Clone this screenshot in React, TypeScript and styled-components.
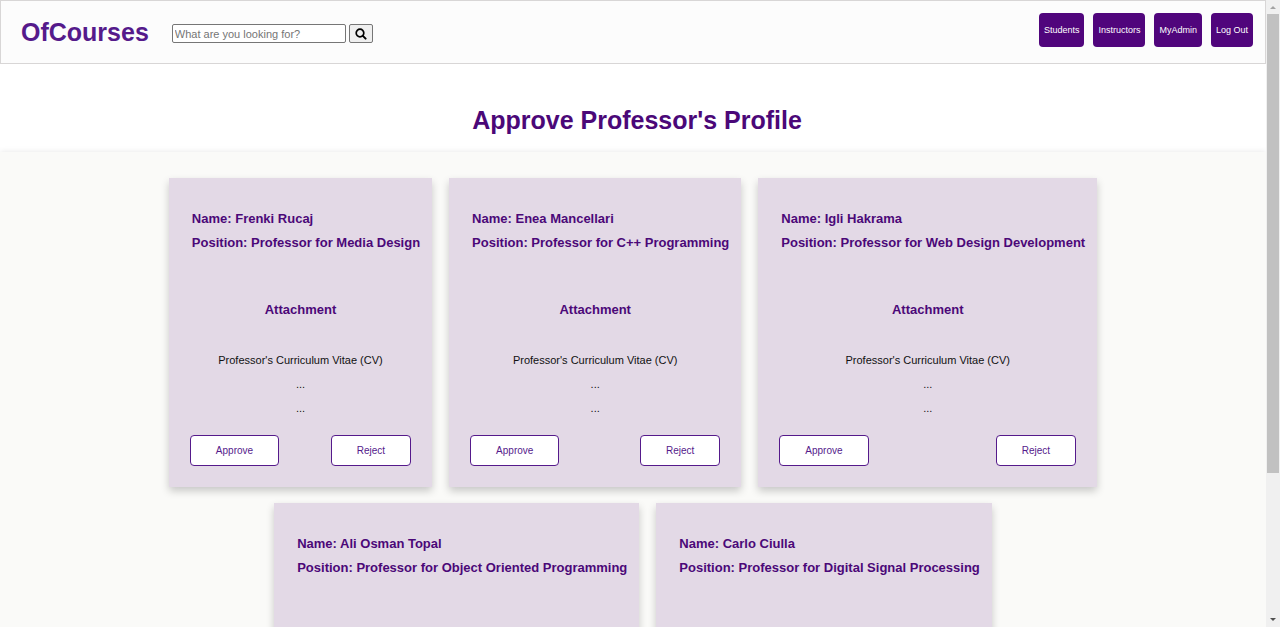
import React from "react";
import styled, { createGlobalStyle } from "styled-components";

const GlobalStyle = createGlobalStyle`
  *, *::before, *::after { box-sizing: border-box; }
  body {
    margin: 0;
    background: #fff;
    font-family: Arial, "Liberation Sans", sans-serif;
    color: #111;
  }
`;

const Shell = styled.div`
  display: flex;
  height: 100vh;
`;

const Page = styled.div`
  flex: 1;
  min-width: 0;
  display: flex;
  flex-direction: column;
  overflow-y: auto;
  scrollbar-width: none;
`;

const Header = styled.header`
  flex: none;
  display: flex;
  align-items: flex-start;
  min-height: 64px;
  padding: 12px 12px 0 20px;
  border: 1px solid #d8d6d6;
  background: #fcfcfc;
`;

const Logo = styled.a`
  color: #551a8b;
  font-size: 25px;
  line-height: 38px;
  font-weight: bold;
  text-decoration: none;
`;

const Search = styled.form`
  display: flex;
  gap: 3px;
  margin: 11px 0 0 23px;
`;

const SearchInput = styled.input`
  width: 174px;
  height: 19px;
  padding: 0 2px;
  border: 1px solid #767676;
  border-radius: 2px;
  background: #fff;
  font: 11px Arial, "Liberation Sans", sans-serif;
  &::placeholder { color: #757575; }
`;

const SearchButton = styled.button`
  display: flex;
  align-items: center;
  justify-content: center;
  width: 24px;
  height: 19px;
  padding: 0;
  border: 1px solid #767676;
  border-radius: 2px;
  background: #efefef;
`;

const Nav = styled.nav`
  display: flex;
  gap: 9px;
  margin-left: auto;
`;

const NavLink = styled.a`
  height: 34px;
  padding: 0 5px;
  border-radius: 4px;
  background: #50057c;
  color: #fff;
  font-size: 9px;
  line-height: 34px;
  text-decoration: none;
`;

const Title = styled.h1`
  flex: none;
  margin: 0;
  padding: 38px 0 14px 8px;
  color: #4b0878;
  font-size: 25px;
  line-height: 36px;
  text-align: center;
`;

const Board = styled.main`
  flex: 1 0 auto;
  display: flex;
  flex-wrap: wrap;
  justify-content: center;
  align-content: flex-start;
  gap: 16px 17px;
  padding: 26px 0 8px;
  background: #fafaf8;
  box-shadow: 0 0 6px rgba(0, 0, 0, 0.1);
`;

const Card = styled.article`
  padding: 29px 21px 21px;
  background: #e3d9e6;
  box-shadow: 0 4px 8px rgba(0, 0, 0, 0.2);
`;

const Identity = styled.h2`
  margin: 0 -9px 0 2px;
  color: #4b0878;
  font-size: 13px;
  line-height: 24px;
`;

const Attachment = styled.section`
  padding: 43px 0 15px;
  font-size: 11px;
  text-align: center;
`;

const AttachmentTitle = styled.h3`
  margin: 0 0 26px;
  color: #4b0878;
  font-size: 13px;
  line-height: 24px;
`;

const Line = styled.p`
  margin: 0;
  line-height: 24px;
`;

const Actions = styled.div`
  display: flex;
  justify-content: space-between;
`;

const Action = styled.button`
  height: 31px;
  padding: 0 25px;
  border: 1px solid #551a8b;
  border-radius: 4px;
  background: #fff;
  color: #551a8b;
  font: 10px Arial, "Liberation Sans", sans-serif;
`;

const ScrollRail = styled.div`
  flex: none;
  display: flex;
  flex-direction: column;
  align-items: center;
  width: 14px;
  background: #f0f0f0;
`;

const ScrollTrack = styled.div`
  flex: 1;
  width: 12px;
`;

const ScrollThumb = styled.div`
  height: calc(100% * 23 / 30);
  background: #c1c1c1;
`;

const Arrow = styled.svg`
  display: block;
  flex: none;
  width: 14px;
  height: 14px;
`;

const professors = [
  { name: "Frenki Rucaj", subject: "Media Design" },
  { name: "Enea Mancellari", subject: "C++ Programming" },
  { name: "Igli Hakrama", subject: "Web Design Development" },
  { name: "Ali Osman Topal", subject: "Object Oriented Programming" },
  { name: "Carlo Ciulla", subject: "Digital Signal Processing" },
];

const links = ["Students", "Instructors", "MyAdmin", "Log Out"];

export default function App() {
  return (
    <>
      <GlobalStyle />
      <Shell>
        <Page>
          <Header>
            <Logo href="#">OfCourses</Logo>
            <Search onSubmit={(e: React.FormEvent) => e.preventDefault()}>
              <SearchInput type="text" aria-label="Search" placeholder="What are you looking for?" />
              <SearchButton type="submit" aria-label="Search">
                <svg width="12" height="12" viewBox="0 0 12 12" fill="none" stroke="#000">
                  <circle cx="5" cy="5" r="3.8" strokeWidth="1.7" />
                  <path d="M7.9 7.9L10.6 10.6" strokeWidth="2" strokeLinecap="round" />
                </svg>
              </SearchButton>
            </Search>
            <Nav>
              {links.map((label) => (
                <NavLink key={label} href="#">{label}</NavLink>
              ))}
            </Nav>
          </Header>
          <Title>Approve Professor's Profile</Title>
          <Board>
            {professors.map((p) => (
              <Card key={p.name}>
                <Identity>
                  Name: {p.name}
                  <br />
                  Position: Professor for {p.subject}
                </Identity>
                <Attachment>
                  <AttachmentTitle>Attachment</AttachmentTitle>
                  <Line>Professor's Curriculum Vitae (CV)</Line>
                  <Line>...</Line>
                  <Line>...</Line>
                </Attachment>
                <Actions>
                  <Action type="button">Approve</Action>
                  <Action type="button">Reject</Action>
                </Actions>
              </Card>
            ))}
          </Board>
        </Page>
        <ScrollRail aria-hidden="true">
          <Arrow viewBox="0 0 14 14"><path d="M4 9L7 6L10 9Z" fill="#a3a3a3" /></Arrow>
          <ScrollTrack><ScrollThumb /></ScrollTrack>
          <Arrow viewBox="0 0 14 14"><path d="M4 5L7 8L10 5Z" fill="#505050" /></Arrow>
        </ScrollRail>
      </Shell>
    </>
  );
}
